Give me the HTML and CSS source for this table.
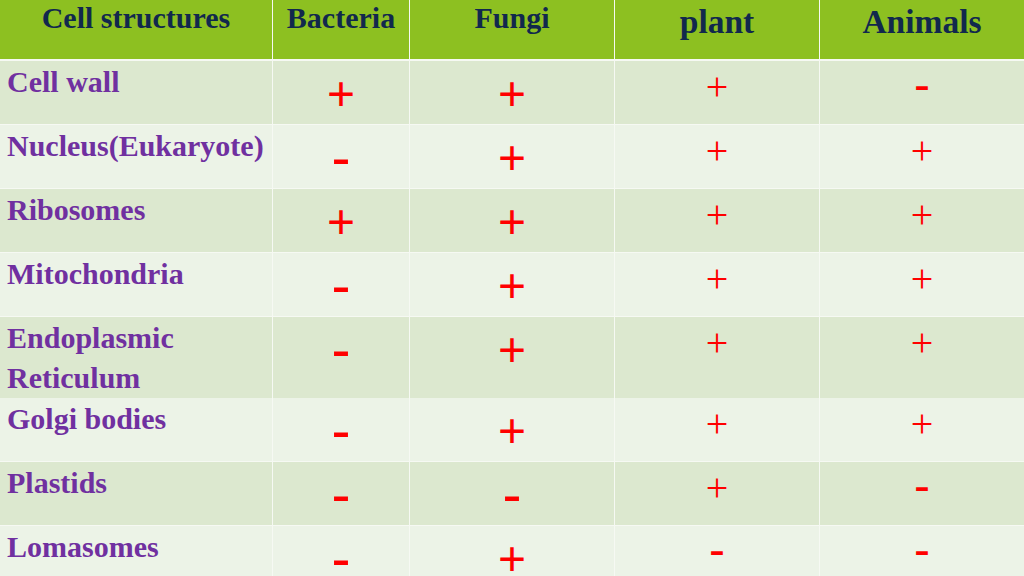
FILE: index.html
```html
<!DOCTYPE html>
<html>
<head>
<meta charset="utf-8">
<link rel="stylesheet" href="styles.css">
</head>
<body>
<div class="table">
  <div class="row head">
    <div class="hc">Cell structures</div>
    <div class="hc">Bacteria</div>
    <div class="hc">Fungi</div>
    <div class="hc large">plant</div>
    <div class="hc large">Animals</div>
  </div>
  <div class="row dark">
    <div class="label">Cell wall</div>
    <div class="v bp">+</div>
    <div class="v bp">+</div>
    <div class="v sp">+</div>
    <div class="v sm">-</div>
  </div>
  <div class="row light">
    <div class="label">Nucleus(Eukaryote)</div>
    <div class="v bm">-</div>
    <div class="v bp">+</div>
    <div class="v sp">+</div>
    <div class="v sp">+</div>
  </div>
  <div class="row dark">
    <div class="label">Ribosomes</div>
    <div class="v bp">+</div>
    <div class="v bp">+</div>
    <div class="v sp">+</div>
    <div class="v sp">+</div>
  </div>
  <div class="row light">
    <div class="label">Mitochondria</div>
    <div class="v bm">-</div>
    <div class="v bp">+</div>
    <div class="v sp">+</div>
    <div class="v sp">+</div>
  </div>
  <div class="row dark tall">
    <div class="label">Endoplasmic Reticulum</div>
    <div class="v bm">-</div>
    <div class="v bp">+</div>
    <div class="v sp">+</div>
    <div class="v sp">+</div>
  </div>
  <div class="row light">
    <div class="label">Golgi bodies</div>
    <div class="v bm">-</div>
    <div class="v bp">+</div>
    <div class="v sp">+</div>
    <div class="v sp">+</div>
  </div>
  <div class="row dark">
    <div class="label">Plastids</div>
    <div class="v bm">-</div>
    <div class="v bm">-</div>
    <div class="v sp">+</div>
    <div class="v sm">-</div>
  </div>
  <div class="row light">
    <div class="label">Lomasomes</div>
    <div class="v bm">-</div>
    <div class="v bp">+</div>
    <div class="v sm">-</div>
    <div class="v sm">-</div>
  </div>
</div>
</body>
</html>
```

FILE: styles.css
```css
html, body {
  margin: 0;
  padding: 0;
  width: 1024px;
  height: 576px;
  overflow: hidden;
  background: #f6f9f3;
}

.table {
  display: flex;
  flex-direction: column;
  gap: 1px;
  background: #f6f9f3;
  font-family: "Liberation Serif", "Times New Roman", serif;
  font-weight: bold;
}

.row {
  display: grid;
  grid-template-columns: 272px 136px 204px 204px 1fr;
  column-gap: 1px;
  height: 63px;
}

.row.tall {
  height: 80px;
}

.row.head {
  height: 59px;
  margin-bottom: 1px;
}

.row > div {
  min-width: 0;
}

.head .hc {
  background: #8dc021;
  color: #11284d;
  text-align: center;
  font-size: 30px;
  line-height: 34px;
  padding-top: 1px;
}

.head .hc.large {
  font-size: 33.5px;
  line-height: 38px;
  padding-top: 3px;
}

.dark > div {
  background: #dce8cf;
}

.light > div {
  background: #ecf3e7;
}

.label {
  color: #7030a0;
  font-size: 30px;
  line-height: 40px;
  padding: 1px 0 0 7px;
}

.v {
  color: #ff0000;
  text-align: center;
  font-weight: normal;
}

.v.bp {
  font-family: "Liberation Sans", Arial, sans-serif;
  font-size: 48px;
  line-height: 32px;
  padding-top: 17px;
}

.v.bm {
  font-family: "Liberation Sans", Arial, sans-serif;
  font-size: 57px;
  line-height: 36px;
  padding-top: 14px;
}

.v.sp {
  font-family: "Liberation Serif", "Times New Roman", serif;
  font-size: 40px;
  line-height: 30px;
  padding-top: 11px;
}

.v.sm {
  font-family: "Liberation Sans", Arial, sans-serif;
  font-size: 48px;
  line-height: 30px;
  padding-top: 9px;
}
```
